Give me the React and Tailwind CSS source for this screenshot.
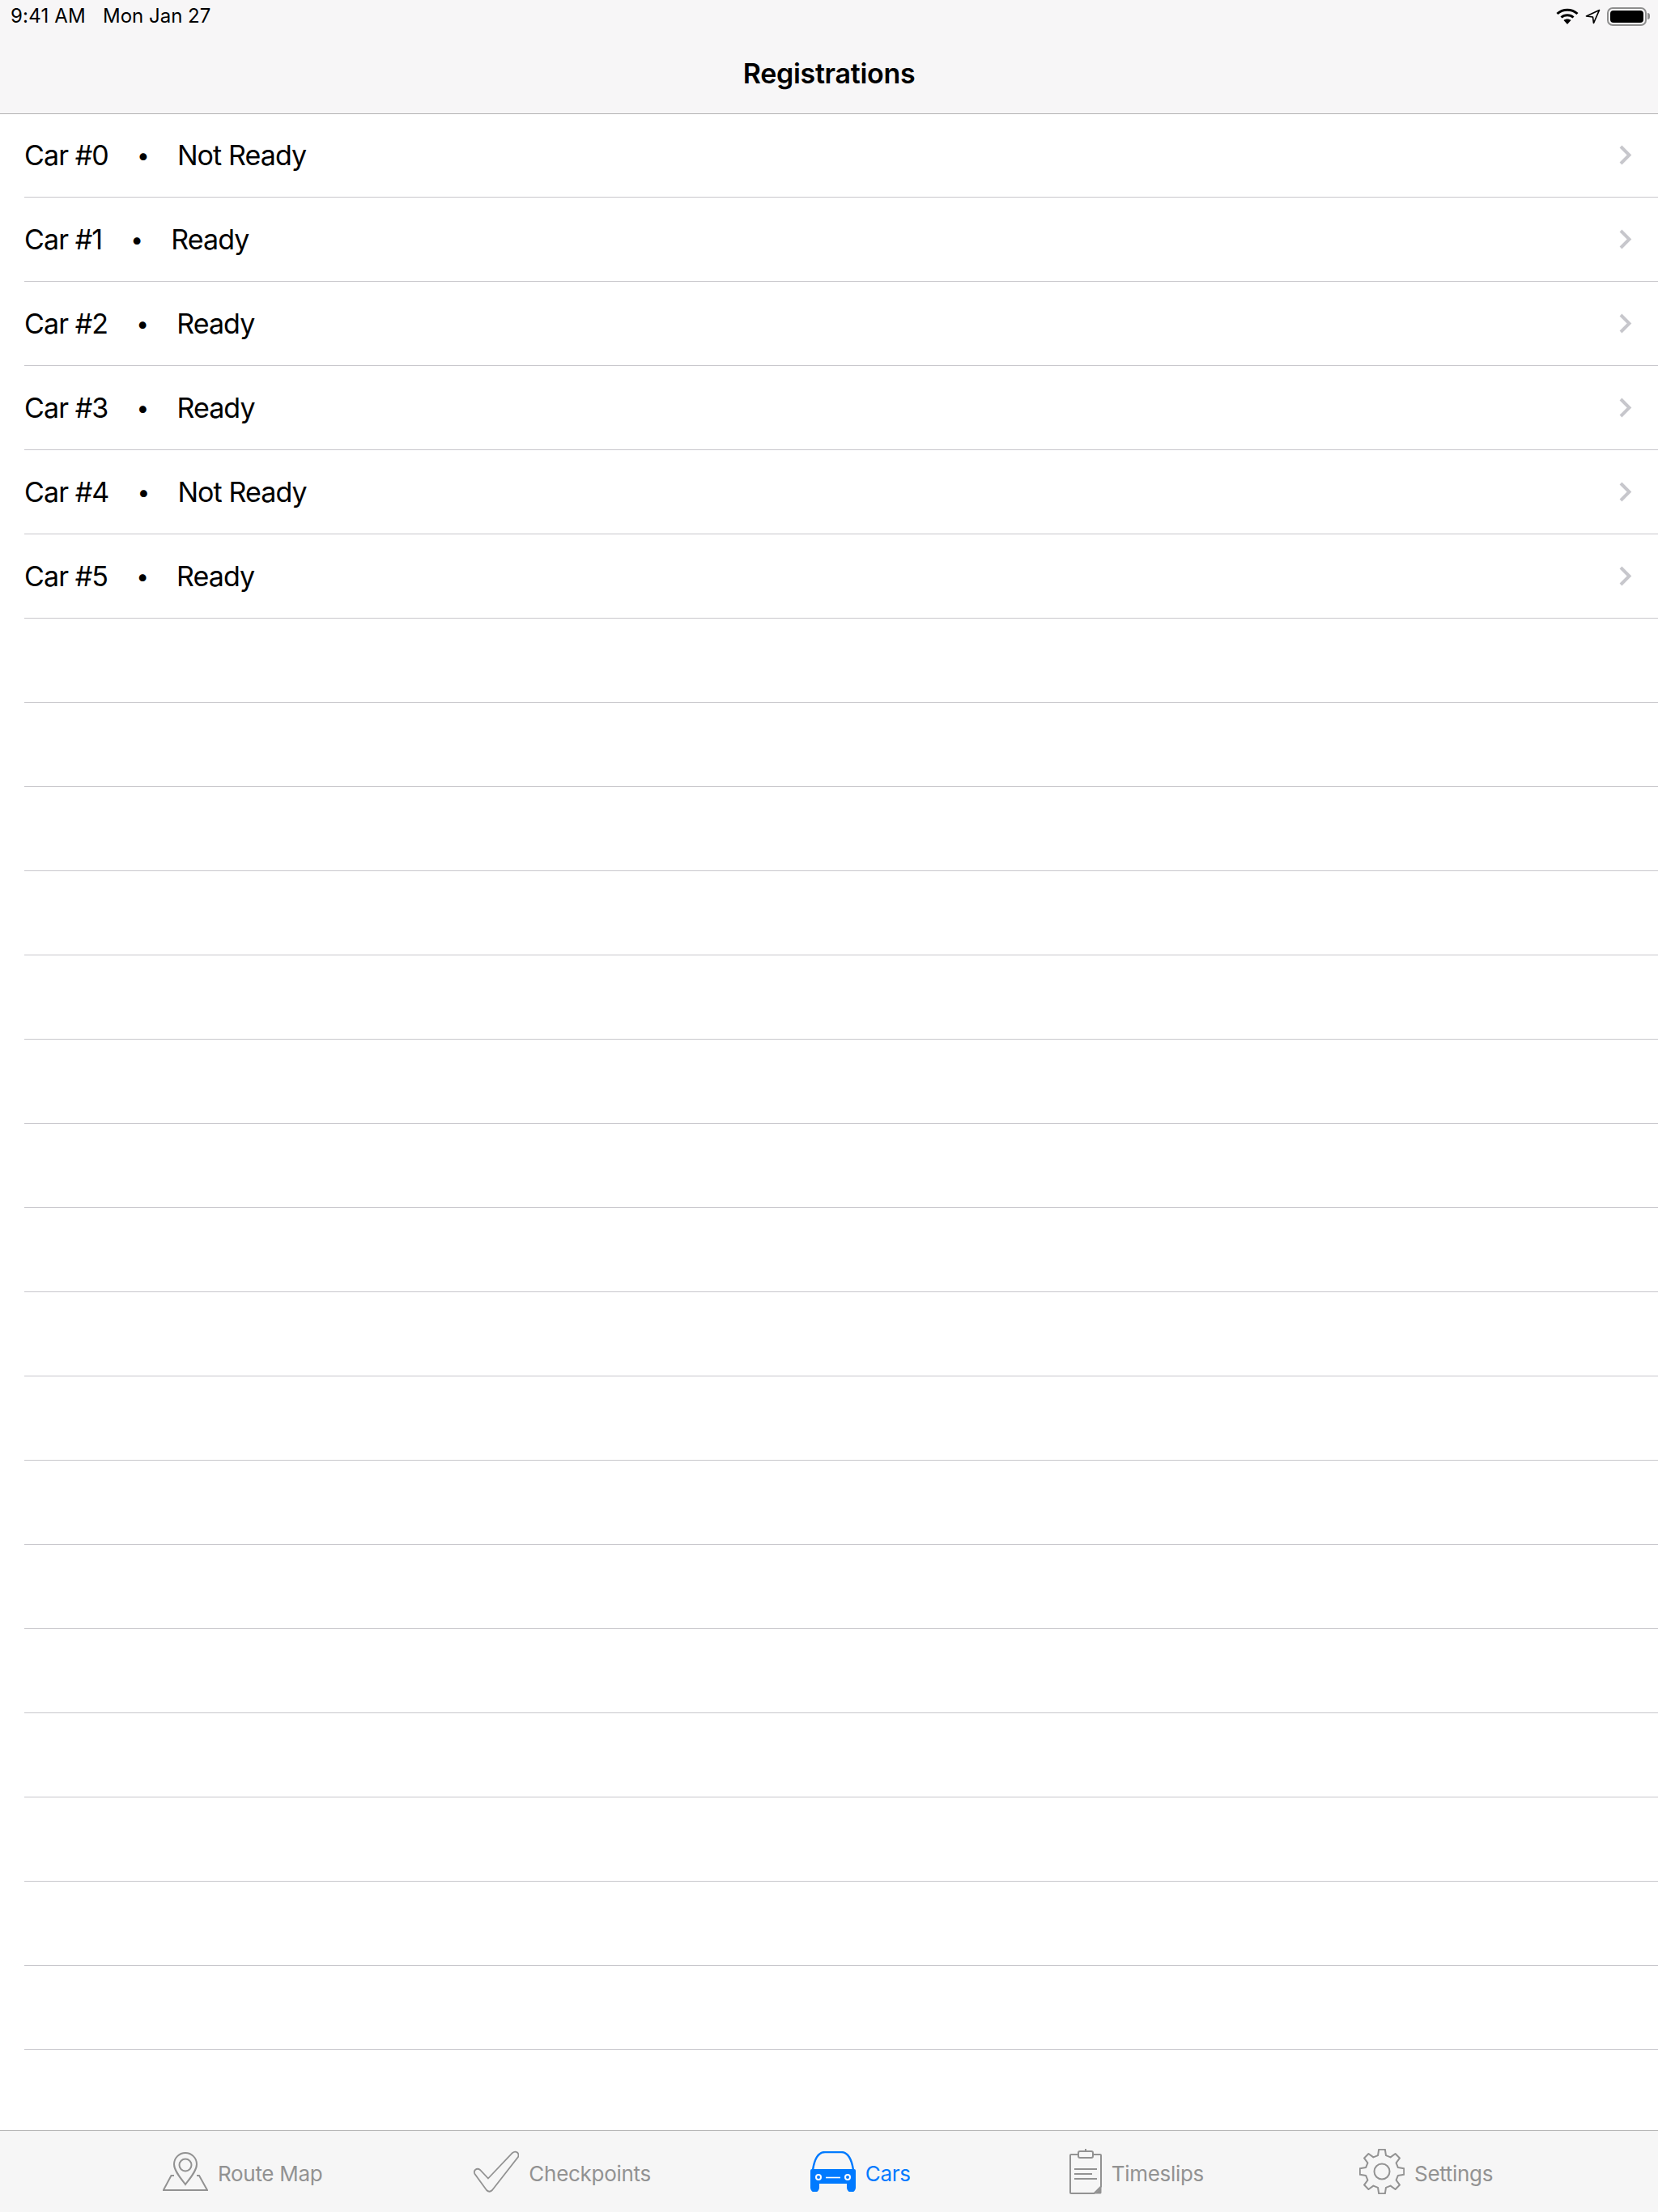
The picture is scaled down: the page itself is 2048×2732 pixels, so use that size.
import { Fragment } from "react";

const ROWS = [
  { car: "Car #0", status: "Not Ready" },
  { car: "Car #1", status: "Ready" },
  { car: "Car #2", status: "Ready" },
  { car: "Car #3", status: "Ready" },
  { car: "Car #4", status: "Not Ready" },
  { car: "Car #5", status: "Ready" },
];

const EMPTY_ROWS = Array.from({ length: 17 }, (_, i) => i);

// 8 tooth gear, centre 39,38
function gearPath() {
  const pt = (deg, r) => {
    const a = ((deg - 90) * Math.PI) / 180;
    return `${(39 + r * Math.cos(a)).toFixed(2)} ${(38 + r * Math.sin(a)).toFixed(2)}`;
  };
  let d = "";
  for (let i = 0; i < 8; i++) {
    const c = i * 45;
    d += `${i === 0 ? "M" : "L"}${pt(c - 14, 20.5)} L${pt(c - 8, 27.5)} L${pt(c + 8, 27.5)} L${pt(c + 14, 20.5)} `;
  }
  return d + "Z";
}

function RouteIcon() {
  return (
    <svg width="56" height="48" viewBox="11 14 56 48" fill="none" stroke="#929292" strokeWidth="2">
      <path d="M39 54 C33 46 25 37 25 29 A14 14 0 0 1 53 29 C53 37 45 46 39 54Z" />
      <circle cx="39" cy="30" r="7.5" />
      <path d="M25 43 H21.5 L11.8 61 H66 L56 43 H53" />
    </svg>
  );
}

function CheckIcon() {
  return (
    <svg width="56" height="52" viewBox="10 12 56 52" fill="none" stroke="#929292" strokeWidth="1.8">
      <path d="M28 46.5 L58 15 Q61 12.5 64 14.5 Q66.5 17 65 20 L33 61 Q29.5 64.5 26 61 L11.5 41 Q10 38 12 36 Q15 33.5 18 36 Z" />
    </svg>
  );
}

function CarIcon() {
  return (
    <svg width="56" height="50" viewBox="10 13 56 50">
      <path d="M13 36 C15 23 20 14 28 14 H48 C56 14 61 23 63 36" fill="none" stroke="#007aff" strokeWidth="2.4" />
      <path d="M12 35 H64 Q66 35 66 37 V58 A5.5 5.5 0 0 1 55 58 V53 H21 V58 A5.5 5.5 0 0 1 10 58 V37 Q10 35 12 35Z" fill="#007aff" />
      <circle cx="20" cy="45" r="3" fill="#007aff" stroke="#fff" strokeWidth="2" />
      <circle cx="56" cy="45" r="3" fill="#007aff" stroke="#fff" strokeWidth="2" />
      <path d="M29 45.5 H47" stroke="#fff" strokeWidth="1.6" />
    </svg>
  );
}

function ClipboardIcon() {
  return (
    <svg width="40" height="56" viewBox="20 10 40 56" fill="none" stroke="#929292" strokeWidth="2">
      <path d="M31 17 H22 Q21 17 21 18 V64 Q21 65 22 65 H50.5 L59 56.5 V18 Q59 17 58 17 H49" />
      <rect x="31" y="13" width="18" height="8" rx="2" />
      <path d="M40 10 V13" />
      <path d="M26 35 H54 M26 41 H48 M26 47 H54" />
      <path d="M59.5 57 V64 Q59.5 65.5 58 65.5 H51 Z" fill="#929292" stroke="none" />
    </svg>
  );
}

function GearIcon() {
  return (
    <svg width="56" height="56" viewBox="11 10 56 56" fill="none" stroke="#929292" strokeWidth="2" strokeLinejoin="round">
      <path d={gearPath()} />
      <circle cx="39" cy="38" r="9.5" />
    </svg>
  );
}

const TABS = [
  { label: "Route Map", Icon: RouteIcon, cls: "ml-[201px] text-[#929292]" },
  { label: "Checkpoints", Icon: CheckIcon, cls: "ml-[187px] text-[#929292]" },
  { label: "Cars", Icon: CarIcon, cls: "ml-[197px] text-[#007aff]" },
  { label: "Timeslips", Icon: ClipboardIcon, cls: "ml-[196px] text-[#929292]" },
  { label: "Settings", Icon: GearIcon, cls: "ml-[192px] text-[#929292]" },
];

function Chevron() {
  return (
    <svg width="16" height="25" viewBox="0 0 16 25" fill="none" stroke="#c7c7cc" strokeWidth="4">
      <path d="M2 2 L12.5 12.5 L2 23" />
    </svg>
  );
}

function StatusIcons() {
  return (
    <div className="flex items-center">
      <svg width="28" height="20" viewBox="0 0 28 20" fill="none" stroke="#000" strokeWidth="3">
        <path d="M1.5 7 C8.5 0.5 19.5 0.5 26.5 7" />
        <path d="M6.5 11.5 C10.5 7.8 17.5 7.8 21.5 11.5" />
        <path d="M14 20 L9.5 15 C12 13 16 13 18.5 15 Z" fill="#000" stroke="none" />
      </svg>
      <svg className="ml-[8px]" width="19" height="19" viewBox="0 0 19 19" fill="none" stroke="#000" strokeWidth="1.7" strokeLinejoin="round">
        <path d="M17.5 1.5 L1.5 9 L9.5 10 L10.5 17.5 Z" />
      </svg>
      <div className="ml-[8px] w-[49px] h-[23px] rounded-[7px] border-2 border-[#8e8e8e] p-[2px]">
        <div className="w-full h-full rounded-[4px] bg-black" />
      </div>
      <div className="ml-[1px] w-[3px] h-[8px] rounded-r-full bg-[#8e8e8e]" />
    </div>
  );
}

export default function App() {
  return (
    <div className="w-[2048px] h-[2732px] flex flex-col bg-white text-black font-['Inter','Liberation_Sans',sans-serif]">
      {/* Status + nav bar */}
      <div className="h-[141px] shrink-0 bg-[#f7f6f7] border-b border-[#b2b2b2]">
        <div className="h-[40px] flex items-center justify-between pl-[13px] pr-[10px] text-[24px]">
          <div className="flex">
            <span className="tracking-[0.2px]">9:41 AM</span>
            <span className="ml-[21px]">Mon Jan 27</span>
          </div>
          <StatusIcons />
        </div>
        <div className="h-[100px] flex items-center justify-center text-[34px] font-semibold tracking-[-0.3px]">
          Registrations
        </div>
      </div>

      {/* List */}
      <div className="flex-1 -mt-px pl-[30px]">
        {ROWS.map((row) => (
          <div key={row.car} className="h-[104px] flex items-center pr-[32px] border-b border-[#c8c7cc] text-[34px] tracking-[-0.9px]">
            <span>{row.car}</span>
            <span className="w-[85px] text-center text-[28px]">•</span>
            <span className="flex-1">{row.status}</span>
            <Chevron />
          </div>
        ))}
        {EMPTY_ROWS.map((i) => (
          <Fragment key={i}>
            <div className="h-[104px] border-b border-[#c8c7cc]" />
          </Fragment>
        ))}
      </div>

      {/* Tab bar */}
      <div className="h-[101px] shrink-0 flex items-center bg-[#f6f6f6] border-t border-[#b2b2b2]">
        {TABS.map(({ label, Icon, cls }) => (
          <div key={label} className={`flex items-center gap-[12px] text-[26px] tracking-[-0.3px] ${cls}`}>
            <Icon />
            <span className="pt-[4px]">{label}</span>
          </div>
        ))}
      </div>
    </div>
  );
}
